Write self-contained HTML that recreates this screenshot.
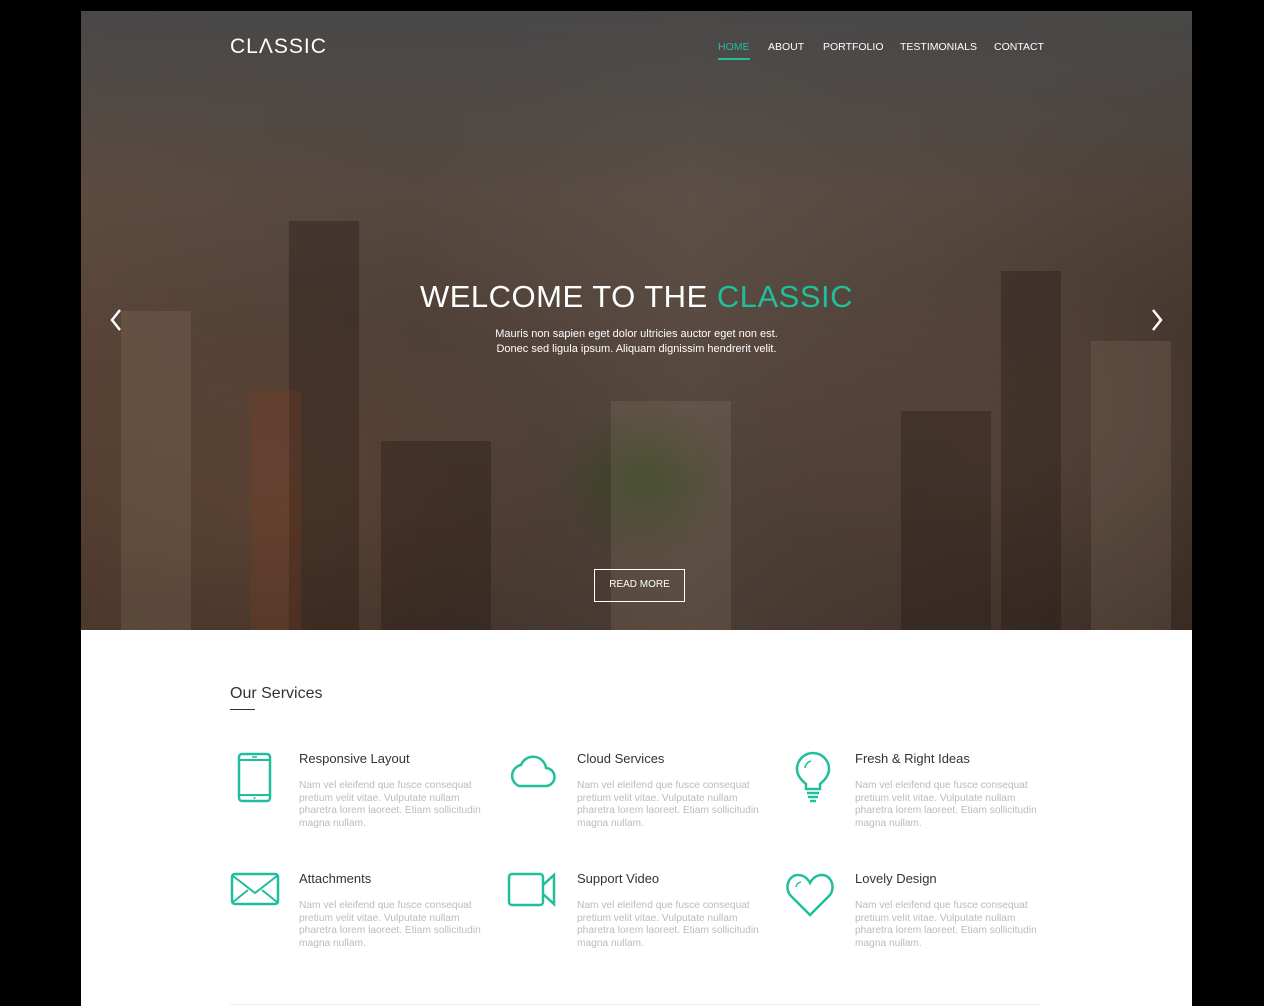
<!DOCTYPE html>
<html><head><meta charset="utf-8"><style>
*{margin:0;padding:0;box-sizing:border-box}
body{width:1264px;height:1006px;background:#000;font-family:"Liberation Sans",sans-serif;overflow:hidden;position:relative}
#page{position:absolute;left:81px;top:11px;width:1111px;height:995px;background:#fff;overflow:hidden}
#hero{position:absolute;left:0;top:0;width:1111px;height:619px;
background:
linear-gradient(180deg,rgba(72,72,72,.97) 0%,rgba(75,72,70,.88) 12%,rgba(80,70,62,.55) 30%,rgba(55,42,34,.35) 55%,rgba(35,25,18,.45) 100%),
radial-gradient(ellipse 90px 80px at 565px 470px,#3f5a2a,transparent),
radial-gradient(ellipse 300px 200px at 200px 500px,#7a5a45,transparent),
radial-gradient(ellipse 300px 200px at 900px 450px,#6a5548,transparent),
linear-gradient(90deg,#6b5040,#5a4a40 30%,#6a5a50 55%,#5b4a40 80%,#4a3a30);}
.tw{position:absolute;background:rgba(25,18,14,.3)}
.lt{position:absolute;background:rgba(200,180,160,.12)}
.logo{position:absolute;left:149px;top:24px;color:#fff;font-size:21px;letter-spacing:1px}
nav{position:absolute;top:30px;left:637px;font-size:10.5px;color:#fff}
nav span{position:absolute;white-space:nowrap}
.home{color:#1fbf9b}
.home:after{content:"";position:absolute;left:0;right:0;top:17px;height:2px;background:#1fbf9b}
h1{position:absolute;top:268px;left:0;width:1111px;text-align:center;color:#fff;font-weight:normal;font-size:31px;letter-spacing:.5px}
h1 b{color:#1fbf9b;font-weight:normal}
.sub{position:absolute;top:316px;left:0;width:1111px;text-align:center;color:#fff;font-size:11px;line-height:15px}
.btn{position:absolute;left:513px;top:558px;width:91px;height:33px;border:1.5px solid #fff;color:#fff;font-size:10px;text-align:center;line-height:30px}
.arr{position:absolute;top:297px}
h2{position:absolute;left:149px;top:685px;font-weight:normal;font-size:16px;color:#333;white-space:nowrap}
.ul{position:absolute;left:149px;top:709px;width:25px;height:1px;background:#333}
.svc{position:absolute;width:220px;white-space:nowrap}
.svc h3{font-weight:normal;font-size:13px;color:#333;margin-bottom:14px}
.svc p{font-size:10.2px;line-height:12.6px;color:#bbb}
.ic{position:absolute}
.hr{position:absolute;left:230px;top:1004px;width:810px;height:1px;background:#eee}
</style></head><body><div id="page">
<div id="hero">
<div class="tw" style="left:208px;top:210px;width:70px;height:409px"></div>
<div class="tw" style="left:170px;top:380px;width:50px;height:239px;background:rgba(130,60,35,.25)"></div>
<div class="tw" style="left:300px;top:430px;width:110px;height:189px"></div>
<div class="tw" style="left:920px;top:260px;width:60px;height:359px"></div>
<div class="tw" style="left:820px;top:400px;width:90px;height:219px"></div>
<div class="lt" style="left:530px;top:390px;width:120px;height:229px"></div>
<div class="lt" style="left:40px;top:300px;width:70px;height:319px"></div>
<div class="lt" style="left:1010px;top:330px;width:80px;height:289px"></div>
<div class="logo">CL&Lambda;SSIC</div>
<nav><span class="home" style="left:0">HOME</span><span style="left:50px">ABOUT</span><span style="left:105px">PORTFOLIO</span><span style="left:182px">TESTIMONIALS</span><span style="left:276px">CONTACT</span></nav>
<h1>WELCOME TO THE <b>CLASSIC</b></h1>
<div class="sub">Mauris non sapien eget dolor ultricies auctor eget non est.<br>Donec sed ligula ipsum. Aliquam dignissim hendrerit velit.</div>
<div class="btn">READ MORE</div>
<svg class="arr" style="left:28px" width="14" height="24"><path d="M11 2L3 12l8 10" stroke="#fff" stroke-width="2.5" fill="none"/></svg>
<svg class="arr" style="left:1069px" width="14" height="24"><path d="M3 2l8 10-8 10" stroke="#fff" stroke-width="2.5" fill="none"/></svg>
</div>
</div>
<div style="position:absolute;left:81px;top:0">
<h2>Our Services</h2><div class="ul"></div>
<svg class="ic" style="left:156px;top:752px" width="35" height="51"><rect x="2" y="2" width="31" height="47" rx="3" fill="none" stroke="#1fbf9b" stroke-width="2.5"/><line x1="2" y1="8" x2="33" y2="8" stroke="#1fbf9b" stroke-width="2"/><line x1="2" y1="43" x2="33" y2="43" stroke="#1fbf9b" stroke-width="2"/><line x1="15" y1="5" x2="20" y2="5" stroke="#1fbf9b" stroke-width="1.5"/><circle cx="17.5" cy="46" r="1" fill="#1fbf9b"/></svg>
<svg class="ic" style="left:426px;top:752px" width="50" height="37"><path d="M12 34H38a9 9 0 0 0 1-18 13 13 0 0 0-25-3 11 11 0 0 0-2 21z" fill="none" stroke="#1fbf9b" stroke-width="2.5"/></svg>
<svg class="ic" style="left:714px;top:751px" width="36" height="52"><path d="M11 38v-5C6 29 2 24 2 18a16 16 0 0 1 32 0c0 6-4 11-9 15v5zM11 38h14M12 42h12M13 46h10M15 50h6" fill="none" stroke="#1fbf9b" stroke-width="2.5"/><path d="M10 17a8 8 0 0 1 6-7" fill="none" stroke="#1fbf9b" stroke-width="1.5"/></svg>
<svg class="ic" style="left:149px;top:872px" width="50" height="34"><rect x="2" y="2" width="46" height="30" rx="3" fill="none" stroke="#1fbf9b" stroke-width="2.5"/><path d="M3 4l22 17L47 4M3 30l15-12M47 30L32 18" fill="none" stroke="#1fbf9b" stroke-width="2"/></svg>
<svg class="ic" style="left:426px;top:872px" width="50" height="35"><rect x="2" y="2" width="34" height="31" rx="3" fill="none" stroke="#1fbf9b" stroke-width="2.5"/><path d="M36 13l11-10v29L36 22" fill="none" stroke="#1fbf9b" stroke-width="2.5"/></svg>
<svg class="ic" style="left:704px;top:872px" width="50" height="46"><path d="M25 43L6 24C-1 17 3 3 13 3c6 0 10 4 12 8 2-4 6-8 12-8 10 0 14 14 7 21z" fill="none" stroke="#1fbf9b" stroke-width="2.5"/><path d="M11 15a6 6 0 0 1 5-5" fill="none" stroke="#1fbf9b" stroke-width="1.5"/></svg>
<div class="svc" style="left:218px;top:751px"><h3>Responsive Layout</h3><p>Nam vel eleifend que fusce consequat<br>pretium velit vitae. Vulputate nullam<br>pharetra lorem laoreet. Etiam sollicitudin<br>magna nullam.</p></div>
<div class="svc" style="left:496px;top:751px"><h3>Cloud Services</h3><p>Nam vel eleifend que fusce consequat<br>pretium velit vitae. Vulputate nullam<br>pharetra lorem laoreet. Etiam sollicitudin<br>magna nullam.</p></div>
<div class="svc" style="left:774px;top:751px"><h3>Fresh &amp; Right Ideas</h3><p>Nam vel eleifend que fusce consequat<br>pretium velit vitae. Vulputate nullam<br>pharetra lorem laoreet. Etiam sollicitudin<br>magna nullam.</p></div>
<div class="svc" style="left:218px;top:871px"><h3>Attachments</h3><p>Nam vel eleifend que fusce consequat<br>pretium velit vitae. Vulputate nullam<br>pharetra lorem laoreet. Etiam sollicitudin<br>magna nullam.</p></div>
<div class="svc" style="left:496px;top:871px"><h3>Support Video</h3><p>Nam vel eleifend que fusce consequat<br>pretium velit vitae. Vulputate nullam<br>pharetra lorem laoreet. Etiam sollicitudin<br>magna nullam.</p></div>
<div class="svc" style="left:774px;top:871px"><h3>Lovely Design</h3><p>Nam vel eleifend que fusce consequat<br>pretium velit vitae. Vulputate nullam<br>pharetra lorem laoreet. Etiam sollicitudin<br>magna nullam.</p></div>
</div>
<div class="hr"></div>
</body></html>
